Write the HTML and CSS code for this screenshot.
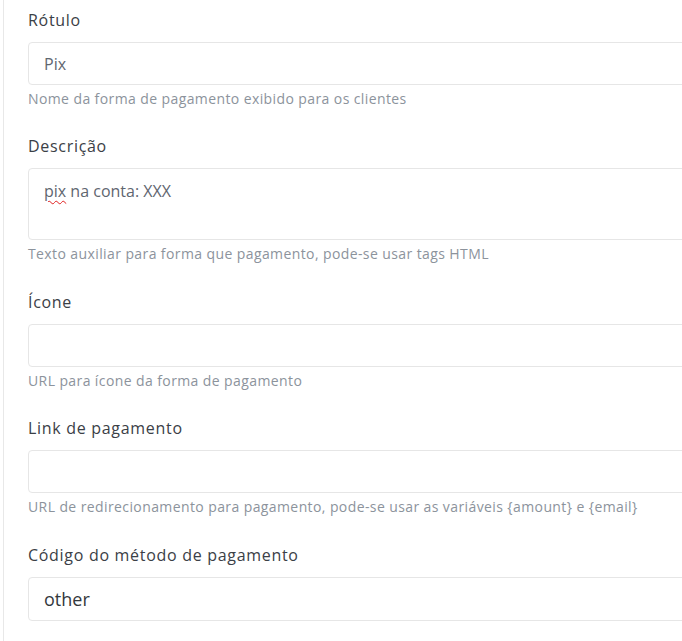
FILE: index.html
```html
<!DOCTYPE html>
<html lang="pt-BR">
<head>
    <meta charset="UTF-8">
    <meta name="viewport" content="width=device-width, initial-scale=1.0">
    <title>Forma de pagamento</title>
    <link rel="stylesheet" href="styles.css">
</head>
<body>

    <div class="panel">
        <div class="field">
            <label for="label">Rótulo</label>
            <input type="text" id="label" class="control" value="Pix">
            <div class="help">Nome da forma de pagamento exibido para os clientes</div>
        </div>

        <div class="field wide">
            <label>Descrição</label>
            <div class="control textarea"><span class="misspelled">pix</span> na conta: XXX</div>
            <div class="help">Texto auxiliar para forma que pagamento, pode-se usar tags HTML</div>
        </div>

        <div class="field">
            <label for="icon">Ícone</label>
            <input type="text" id="icon" class="control">
            <div class="help">URL para ícone da forma de pagamento</div>
        </div>

        <div class="field wide">
            <label for="link">Link de pagamento</label>
            <input type="text" id="link" class="control">
            <div class="help">URL de redirecionamento para pagamento, pode-se usar as variáveis {amount} e {email}</div>
        </div>

        <div class="field">
            <label for="code">Código do método de pagamento</label>
            <input type="text" id="code" class="control large" value="other">
        </div>
    </div>

</body>
</html>
```

FILE: styles.css
```css
body {
    margin: 0;
    background: white;
    font-family: "Open Sans", Arial, sans-serif;
    overflow: hidden;
}
.panel {
    margin-left: 3px;
    border-left: 1px solid #e8e8e8;
    padding: 8px 0 40px 24px;
    width: 720px;
}
.field {
    margin-bottom: 25px;
}
.field.wide {
    margin-bottom: 26px;
}
.field label {
    display: block;
    font-size: 16px;
    line-height: 24px;
    color: #3b4046;
    letter-spacing: 0.7px;
    margin-bottom: 10px;
}
.control {
    display: block;
    box-sizing: border-box;
    width: 100%;
    height: 43px;
    padding: 0 15px;
    border: 1px solid #e6e6e6;
    border-radius: 4px;
    font-family: inherit;
    font-size: 16px;
    color: #5f6670;
    background: white;
    outline: none;
}
.textarea {
    height: 72px;
    margin-top: 1px;
    padding-top: 10px;
    line-height: 24px;
}
.misspelled {
    text-decoration: underline wavy #e02020;
    text-decoration-thickness: 1px;
    text-underline-offset: 3px;
}
.control.large {
    height: 44px;
    font-size: 18px;
    color: #33383d;
}
.help {
    margin-top: 4px;
    font-size: 14px;
    line-height: 20px;
    letter-spacing: 0.4px;
    color: #8c939c;
}
```
